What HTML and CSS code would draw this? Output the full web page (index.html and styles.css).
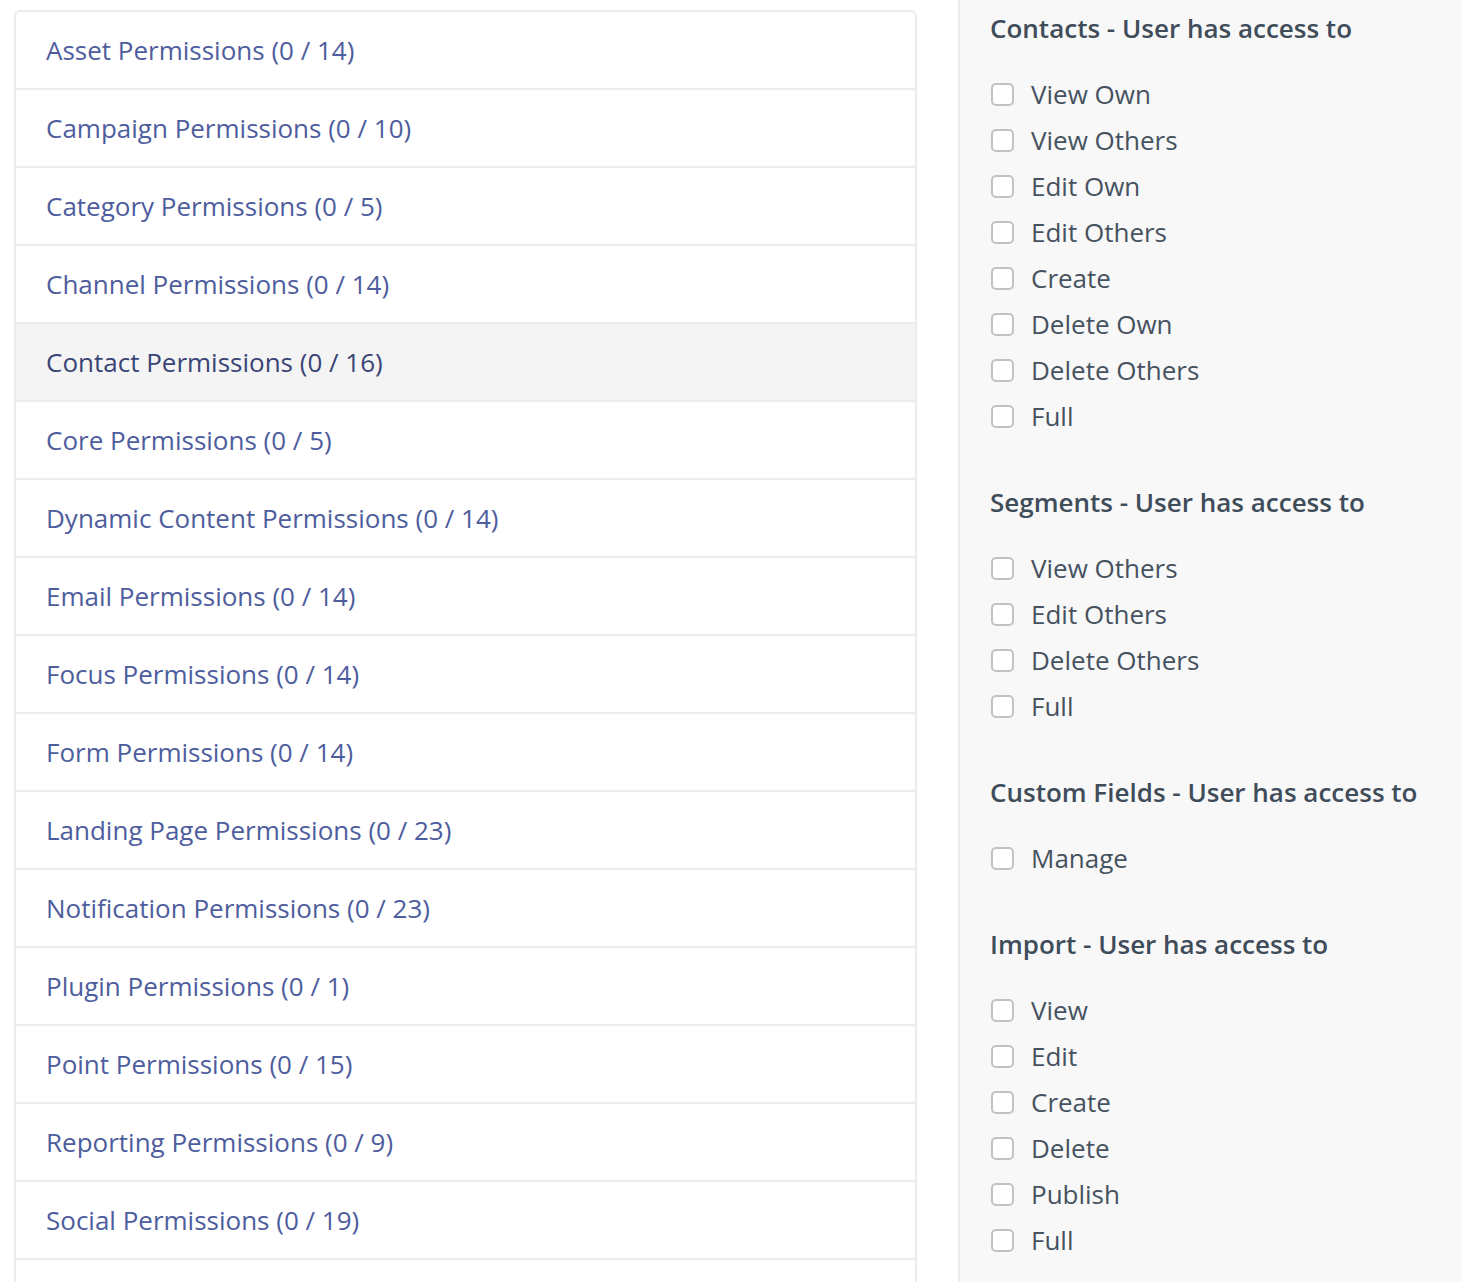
FILE: index.html
```html
<!DOCTYPE html>
<html lang="en">
<head>
    <meta charset="UTF-8">
    <meta name="viewport" content="width=device-width, initial-scale=1.0">
    <title>Role Permissions</title>
    <link rel="stylesheet" href="styles.css">
</head>
<body>
    <div class="page">
        <!-- Bundle list -->
        <div class="bundles">
            <div class="list-group">
                <a class="list-item" href="#">Asset Permissions (0 / 14)</a>
                <a class="list-item" href="#">Campaign Permissions (0 / 10)</a>
                <a class="list-item" href="#">Category Permissions (0 / 5)</a>
                <a class="list-item" href="#">Channel Permissions (0 / 14)</a>
                <a class="list-item active" href="#">Contact Permissions (0 / 16)</a>
                <a class="list-item" href="#">Core Permissions (0 / 5)</a>
                <a class="list-item" href="#">Dynamic Content Permissions (0 / 14)</a>
                <a class="list-item" href="#">Email Permissions (0 / 14)</a>
                <a class="list-item" href="#">Focus Permissions (0 / 14)</a>
                <a class="list-item" href="#">Form Permissions (0 / 14)</a>
                <a class="list-item" href="#">Landing Page Permissions (0 / 23)</a>
                <a class="list-item" href="#">Notification Permissions (0 / 23)</a>
                <a class="list-item" href="#">Plugin Permissions (0 / 1)</a>
                <a class="list-item" href="#">Point Permissions (0 / 15)</a>
                <a class="list-item" href="#">Reporting Permissions (0 / 9)</a>
                <a class="list-item" href="#">Social Permissions (0 / 19)</a>
                <a class="list-item" href="#">Stage Permissions (0 / 10)</a>
            </div>
        </div>

        <!-- Permissions for the selected bundle -->
        <div class="perms">
            <div class="perm-group">
                <h4>Contacts - User has access to</h4>
                <label class="check"><input type="checkbox"> View Own</label>
                <label class="check"><input type="checkbox"> View Others</label>
                <label class="check"><input type="checkbox"> Edit Own</label>
                <label class="check"><input type="checkbox"> Edit Others</label>
                <label class="check"><input type="checkbox"> Create</label>
                <label class="check"><input type="checkbox"> Delete Own</label>
                <label class="check"><input type="checkbox"> Delete Others</label>
                <label class="check"><input type="checkbox"> Full</label>
            </div>

            <div class="perm-group">
                <h4>Segments - User has access to</h4>
                <label class="check"><input type="checkbox"> View Others</label>
                <label class="check"><input type="checkbox"> Edit Others</label>
                <label class="check"><input type="checkbox"> Delete Others</label>
                <label class="check"><input type="checkbox"> Full</label>
            </div>

            <div class="perm-group">
                <h4>Custom Fields - User has access to</h4>
                <label class="check"><input type="checkbox"> Manage</label>
            </div>

            <div class="perm-group">
                <h4>Import - User has access to</h4>
                <label class="check"><input type="checkbox"> View</label>
                <label class="check"><input type="checkbox"> Edit</label>
                <label class="check"><input type="checkbox"> Create</label>
                <label class="check"><input type="checkbox"> Delete</label>
                <label class="check"><input type="checkbox"> Publish</label>
                <label class="check"><input type="checkbox"> Full</label>
            </div>
        </div>
    </div>
</body>
</html>
```

FILE: styles.css
```css
html, body {
    margin: 0;
    height: 100%;
    overflow: hidden;
}
body {
    font-family: "Open Sans", "Liberation Sans", sans-serif;
    font-size: 26px;
    line-height: 36px;
    background-color: white;
}
.page {
    display: grid;
    grid-template-columns: 958px 1fr;
    min-height: 100%;
}
.bundles {
    padding: 10px 41px 0 14px;
}
.list-group {
    border: 2px solid #ebebf0;
    border-radius: 6px 6px 0 0;
    display: flex;
    flex-direction: column;
}
.list-item {
    display: block;
    padding: 20px 30px;
    color: #4e5d9d;
    text-decoration: none;
    border-top: 2px solid #ebebf0;
}
.list-item:first-child {
    border-top: none;
}
.list-item.active {
    background-color: #f4f4f5;
    color: #3a4474;
}
.perms {
    background-color: #f8f8f8;
    border-left: 2px solid #ebebf0;
    padding: 10px 30px 0 30px;
    display: flex;
    flex-direction: column;
    gap: 50px;
}
.perm-group {
    display: flex;
    flex-direction: column;
    gap: 10px;
}
.perm-group h4 {
    margin: 0 0 20px 0;
    font-size: 26px;
    font-weight: 600;
    color: #3f4c5a;
}
.check {
    display: flex;
    align-items: center;
    gap: 17px;
    color: #46525f;
}
.check input {
    appearance: none;
    -webkit-appearance: none;
    margin: 0 0 0 1px;
    width: 23px;
    height: 23px;
    border: 2px solid #c2c2c2;
    border-radius: 5px;
    background-color: white;
    box-sizing: border-box;
}
```
